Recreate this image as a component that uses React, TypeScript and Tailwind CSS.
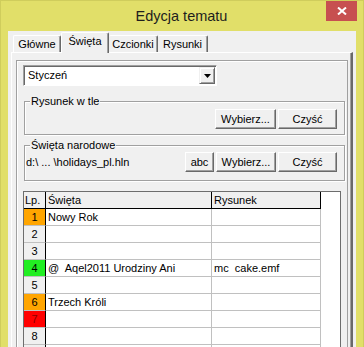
import React from "react";

type Row = { n: number; bg?: string; num?: string; name?: string; pic?: string };

const rows: Row[] = [
  { n: 1, bg: "bg-[#ffa500]", name: "Nowy Rok" },
  { n: 2 },
  { n: 3 },
  { n: 4, bg: "bg-[#22ee22]", name: "@  Aqel2011 Urodziny Ani", pic: "mc  cake.emf" },
  { n: 5 },
  { n: 6, bg: "bg-[#ffa500]", name: "Trzech Króli" },
  { n: 7, bg: "bg-[#ff0000]", num: "text-[#8b0000]" },
  { n: 8 },
  { n: 9 },
];

function WinButton({ children, w }: { children: React.ReactNode; w: string }) {
  return (
    <button
      className={
        "h-[20px] bg-[#f0f0f0] border border-t-white border-l-white border-r-[#696969] border-b-[#696969] shadow-[inset_-1px_-1px_0_#a0a0a0] text-[11px] text-black flex items-center justify-center " +
        w
      }
    >
      {children}
    </button>
  );
}

function Group({ label, children, h }: { label: string; children: React.ReactNode; h: string }) {
  return (
    <div
      className={
        "relative ml-[1px] w-[321px] border border-[#a0a0a0] shadow-[inset_1px_1px_0_#fff,1px_1px_0_#fff] " + h
      }
    >
      <span className="absolute -top-[8px] left-[5px] px-[1px] bg-[#f0f0f0] text-[11px] leading-[14px]">
        {label}
      </span>
      {children}
    </div>
  );
}

export default function App() {
  return (
    <div className="w-[364px] h-[347px] overflow-hidden bg-[#e1df69] border-l border-t border-r border-[#cfcd5c] flex flex-col font-['Liberation_Sans',Arial,sans-serif] text-black">
      {/* title bar */}
      <div className="relative h-[30px] flex items-center justify-center shrink-0">
        <span className="text-[14.5px] text-[#1e1e1e] -ml-[1px] mt-[1px]">Edycja tematu</span>
        <div className="absolute top-0 right-[6px] w-[31px] h-[20px] bg-[#c75050] flex items-center justify-center">
          <svg width="10" height="8" viewBox="0 0 10 8">
            <path d="M1 0.5 L9 7.5 M9 0.5 L1 7.5" stroke="#fff" strokeWidth="2" />
          </svg>
        </div>
      </div>

      {/* client area */}
      <div className="ml-[7px] w-[348px] flex-1 bg-[#f0f0f0] pt-[1px] pl-[3px] flex flex-col">
        {/* tabs */}
        <div className="flex items-end h-[20px] pl-[2px] text-[11px]">
          <div className="w-[48px] h-[17px] border-t border-l border-white border-r border-r-[#696969] shadow-[inset_-1px_0_0_#a0a0a0] rounded-t-[2px] flex items-center justify-center">
            Główne
          </div>
          <div className="relative z-10 w-[48px] h-[21px] -mb-[1px] bg-[#f0f0f0] border-t border-l border-white border-r border-r-[#696969] shadow-[inset_-1px_0_0_#a0a0a0] rounded-t-[2px] flex items-center justify-center pb-[3px]">
            Święta
          </div>
          <div className="w-[49px] h-[17px] border-t border-white border-r border-r-[#696969] shadow-[inset_-1px_0_0_#a0a0a0] rounded-t-[2px] flex items-center justify-center">
            Czcionki
          </div>
          <div className="w-[50px] h-[17px] border-t border-white border-r border-r-[#696969] shadow-[inset_-1px_0_0_#a0a0a0] rounded-t-[2px] flex items-center justify-center">
            Rysunki
          </div>
        </div>

        {/* tab panel */}
        <div className="w-[342px] flex-1 border-t border-l border-white border-r-2 border-r-[#696969] shadow-[inset_-1px_0_0_#a0a0a0] pt-[7px] pl-[4px] pr-[3px]">
          <div className="h-[400px] border border-[#a0a0a0] shadow-[inset_1px_1px_0_#fff] pt-[4px] pl-[6px] flex flex-col">
            {/* combo */}
            <div className="w-[194px] h-[21px] bg-white border border-t-[#a0a0a0] border-l-[#a0a0a0] border-r-white border-b-white shadow-[inset_1px_1px_0_#696969] flex items-center justify-between pl-[4px] pr-[1px]">
              <span className="text-[11px]">Styczeń</span>
              <div className="w-[16px] h-[17px] bg-[#f0f0f0] border border-t-[#f0f0f0] border-l-[#f0f0f0] border-r-[#696969] border-b-[#696969] shadow-[inset_1px_1px_0_#fff,inset_-1px_-1px_0_#a0a0a0] flex items-center justify-center">
                <svg width="7" height="4" viewBox="0 0 7 4">
                  <path d="M0 0 H7 L3.5 4 Z" fill="#000" />
                </svg>
              </div>
            </div>

            {/* group 1 */}
            <div className="mt-[15px]">
              <Group label="Rysunek w tle" h="h-[34px]">
                <div className="flex justify-end gap-[2px] pt-[7px] pr-[7px]">
                  <WinButton w="w-[61px]">Wybierz...</WinButton>
                  <WinButton w="w-[59px]">Czyść</WinButton>
                </div>
              </Group>
            </div>

            {/* group 2 */}
            <div className="mt-[10px]">
              <Group label="Święta narodowe" h="h-[36px]">
                <div className="flex items-start pt-[6px] pr-[7px]">
                  <span className="pl-[1px] text-[11px] leading-[20px] flex-1">d:\ ... \holidays_pl.hln</span>
                  <div className="flex gap-[2px]">
                    <WinButton w="w-[29px]">abc</WinButton>
                    <WinButton w="w-[60px]">Wybierz...</WinButton>
                    <WinButton w="w-[59px]">Czyść</WinButton>
                  </div>
                </div>
              </Group>
            </div>

            {/* grid */}
            <div className="mt-[10px] w-[318px] h-[200px] bg-white border border-[#6d6d6d] text-[11px]">
              <div className="flex h-[17px]">
                <div className="w-[22px] bg-[#f0f0f0] border-r border-b border-black pl-[1px] leading-[16px]">Lp.</div>
                <div className="w-[166px] bg-[#f0f0f0] border-r border-b border-black pl-[2px] leading-[16px]">Święta</div>
                <div className="w-[109px] bg-[#f0f0f0] border-r border-b border-black pl-[2px] leading-[16px]">Rysunek</div>
              </div>
              {rows.map((r) => (
                <div key={r.n} className="flex h-[17px]">
                  <div
                    className={
                      "w-[22px] border-r border-r-black border-b border-b-[#c0c0c0] text-center leading-[16px] " +
                      (r.bg ?? "bg-[#f0f0f0]") +
                      " " +
                      (r.num ?? "")
                    }
                  >
                    {r.n < 9 ? r.n : ""}
                  </div>
                  <div className="w-[166px] border-r border-b border-[#c0c0c0] pl-[2px] leading-[16px] whitespace-pre overflow-hidden">
                    {r.name ?? ""}
                  </div>
                  <div className="w-[109px] border-r border-b border-[#c0c0c0] pl-[2px] leading-[16px] whitespace-pre overflow-hidden">
                    {r.pic ?? ""}
                  </div>
                </div>
              ))}
            </div>
          </div>
        </div>
      </div>
    </div>
  );
}
